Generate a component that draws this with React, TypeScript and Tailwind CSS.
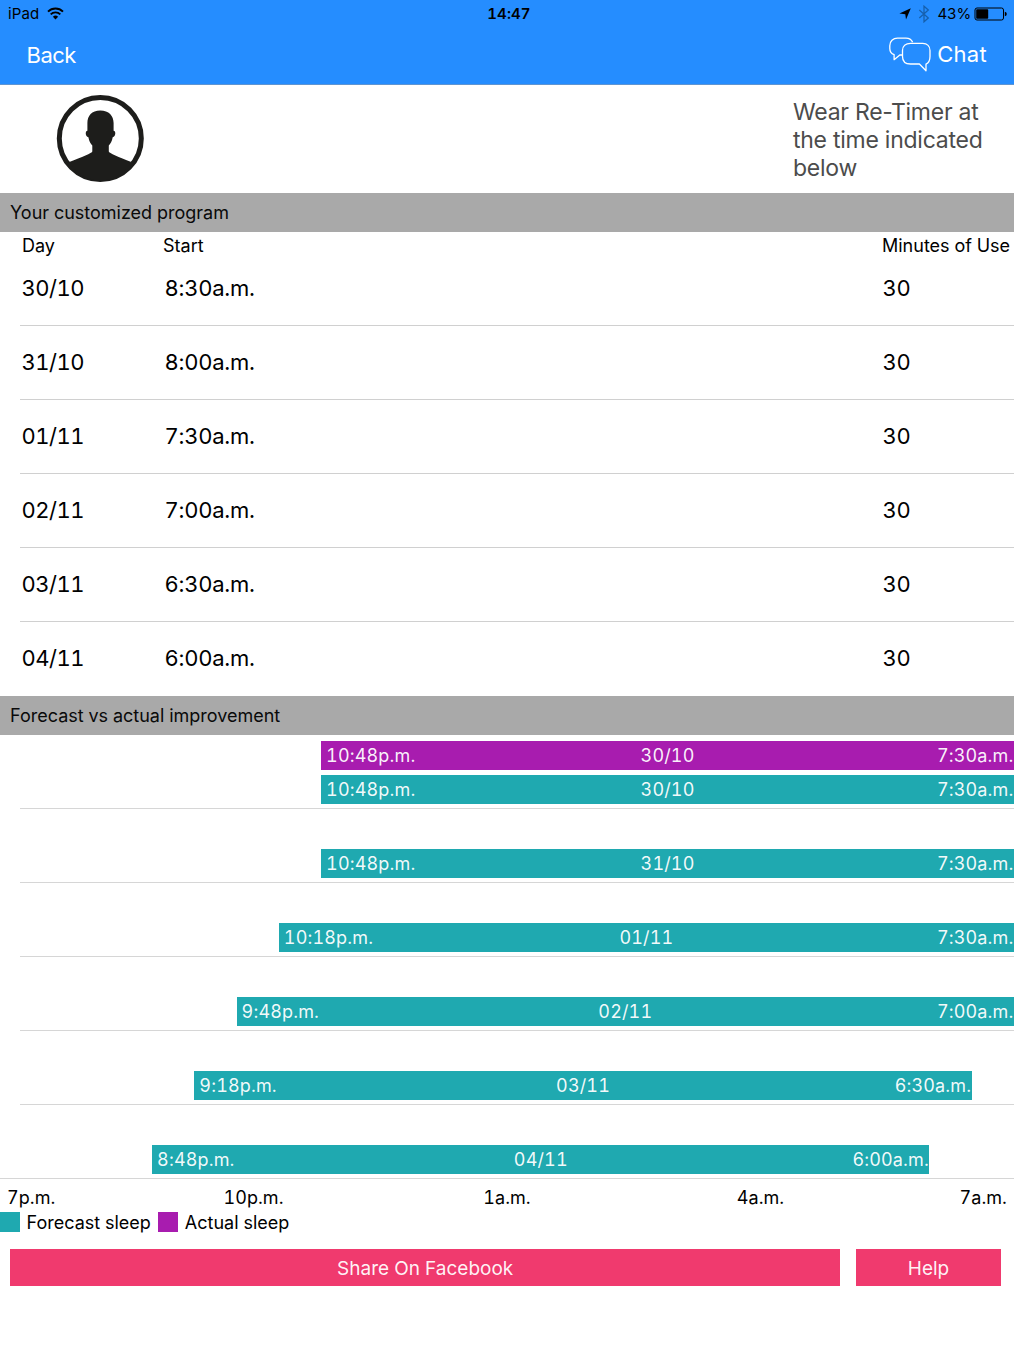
import clsx from "clsx";

const program = [
  { day: "30/10", start: "8:30a.m.", minutes: 30 },
  { day: "31/10", start: "8:00a.m.", minutes: 30 },
  { day: "01/11", start: "7:30a.m.", minutes: 30 },
  { day: "02/11", start: "7:00a.m.", minutes: 30 },
  { day: "03/11", start: "6:30a.m.", minutes: 30 },
  { day: "04/11", start: "6:00a.m.", minutes: 30 },
];

type Sleep = {
  kind: "forecast" | "actual";
  day: string;
  from: string;
  to: string;
  // hours after 7p.m.
  start: number;
  end: number;
};

const nights: Sleep[][] = [
  [
    { kind: "actual", day: "30/10", from: "10:48p.m.", to: "7:30a.m.", start: 3.8, end: 12.5 },
    { kind: "forecast", day: "30/10", from: "10:48p.m.", to: "7:30a.m.", start: 3.8, end: 12.5 },
  ],
  [{ kind: "forecast", day: "31/10", from: "10:48p.m.", to: "7:30a.m.", start: 3.8, end: 12.5 }],
  [{ kind: "forecast", day: "01/11", from: "10:18p.m.", to: "7:30a.m.", start: 3.3, end: 12.5 }],
  [{ kind: "forecast", day: "02/11", from: "9:48p.m.", to: "7:00a.m.", start: 2.8, end: 12 }],
  [{ kind: "forecast", day: "03/11", from: "9:18p.m.", to: "6:30a.m.", start: 2.3, end: 11.5 }],
  [{ kind: "forecast", day: "04/11", from: "8:48p.m.", to: "6:00a.m.", start: 1.8, end: 11 }],
];

const HOURS = 12;

function WifiIcon() {
  return (
    <svg width="17" height="13" viewBox="0 0 17 13" fill="none" stroke="#000" strokeWidth="1.9" className="-mt-0.5" aria-hidden>
      <path d="M1 4.6a10.6 10.6 0 0 1 15 0" />
      <path d="M3.7 7.4a6.8 6.8 0 0 1 9.6 0" />
      <path d="M8.5 12.4 5.9 9.8a3.7 3.7 0 0 1 5.2 0z" fill="#000" stroke="none" />
    </svg>
  );
}

function StatusBar() {
  return (
    <div className="grid h-7 grid-cols-3 items-center text-[15px] text-black">
      <div className="flex items-center gap-[8px] pl-2">
        <span className="tracking-[0.1px]">iPad</span>
        <WifiIcon />
      </div>
      <span className="pl-1 text-center font-semibold tracking-[0.1px]">14:47</span>
      <div className="flex items-center justify-end pr-[7px]">
        <svg width="12" height="12" viewBox="0 0 12 12" aria-hidden>
          <path d="M11.8.3 7 11.6 6.3 6.2.4 5.5z" />
        </svg>
        <svg
          width="12"
          height="18"
          viewBox="0 0 12 18"
          fill="none"
          stroke="#1660ad"
          strokeWidth="1.3"
          className="ml-[7px]"
          aria-hidden
        >
          <path d="m1.3 5 9 8L6 16.8V1.2L10.3 5l-9 8" />
        </svg>
        <span className="ml-[7px] tracking-[-0.2px]">43%</span>
        <svg width="33" height="14" viewBox="0 0 33 14" className="ml-[3px]" aria-hidden>
          <rect x="1" y="1" width="28.5" height="12" rx="2" fill="none" stroke="#000" />
          <rect x="2.2" y="2.2" width="12" height="9.6" rx="0.8" />
          <path d="M30.8 4.7q2 .5 2 2.3t-2 2.3z" />
        </svg>
      </div>
    </div>
  );
}

function ChatIcon() {
  return (
    <svg
      width="42"
      height="35"
      viewBox="0 0 42 35"
      fill="none"
      stroke="#fff"
      strokeWidth="1.3"
      strokeLinejoin="round"
      aria-hidden
    >
      <path d="M23.6 5.1C22.3 2.4 20 1.2 17 1.2H8.5C4 1.2.8 4.4.8 8.7v2.8c0 3 1.4 5 4.3 6.2v5L10.8 18h2.4" />
      <path d="M21.5 6.4h12.2c4.5 0 7.3 3 7.3 7.2v5.9c0 3.9-1.4 6.4-4 7.6v6.7L30.4 27h-8.9c-4.9 0-8-2.8-8-7.5v-5.9c0-4.4 3.2-7.2 8-7.2z" />
    </svg>
  );
}

function Avatar() {
  return (
    <svg width="88" height="88" viewBox="0 0 88 88" aria-hidden>
      <circle cx="44.3" cy="44.5" r="41" fill="#fff" stroke="#1d1d1b" strokeWidth="5" />
      <path
        fill="#1d1d1b"
        d="M44.3 16.500c8.600 0 13.300 5.400 13.300 12.500v7.700c2.600 0 2.200 5.800-.9 6.600-.7 4.200-2.200 6.300-3.900 8.200v6c0 1.600 10 5.500 22.500 10.500-7 11.500-18 18.500-31 18.500s-24-7-31-18.500c12.500-5 23-8.900 23-10.500v-6c-1.700-1.900-3.200-4-3.900-8.200-3.100-.8-3.500-6.600-1-6.600V29c0-7.100 4.300-12.500 12.900-12.500z"
      />
    </svg>
  );
}

function SectionTitle({ children }: { children: string }) {
  return (
    <h2 className="flex h-[39px] items-center bg-[#a9a9a9] pl-2.5 text-[18px] text-[#0a0a0a]">
      {children}
    </h2>
  );
}

function SleepBar({ sleep }: { sleep: Sleep }) {
  const end = Math.min(sleep.end, HOURS);
  return (
    <div
      className={clsx(
        "grid h-[29px] grid-cols-3 items-center pl-[5px] text-[18px] tracking-[0.15px] text-white/95",
        sleep.kind === "actual" ? "bg-[#a81caf]" : "bg-[#1fa9b0]"
      )}
      style={{
        marginLeft: `${(sleep.start / HOURS) * 100}%`,
        width: `${((end - sleep.start) / HOURS) * 100}%`,
      }}
    >
      <span>{sleep.from}</span>
      <span className="-ml-[5px] text-center">{sleep.day}</span>
      <span className="pr-[0.5px] text-right">{sleep.to}</span>
    </div>
  );
}

export default function App() {
  return (
    <div className="min-h-[1352px] w-[1014px] overflow-hidden bg-white font-['Inter','Liberation_Sans',sans-serif] text-black tabular-nums">
      <header className="h-[85px] border-b border-[#5f95d2] bg-[#258dff]">
        <StatusBar />
        <nav className="flex h-[54px] items-center justify-between pl-[26.5px] pr-[27px] text-[22px] text-white">
          <button type="button" className="tracking-[-0.5px]">
            Back
          </button>
          <button type="button" className="flex items-center gap-[6.5px] pb-0.5">
            <ChatIcon />
            <span className="tracking-[0.3px]">Chat</span>
          </button>
        </nav>
      </header>

      <section className="flex h-[108px] justify-between pl-14 pr-7 pt-[9px]">
        <Avatar />
        <p className="w-[193px] pt-1 text-[23px] leading-7 tracking-[-0.25px] whitespace-nowrap text-[#4c4c4c] normal-nums">
          Wear Re-Timer at
          <br />
          the time indicated
          <br />
          below
        </p>
      </section>

      <SectionTitle>Your customized program</SectionTitle>
      <section className="h-[464px]">
        <div className="-mb-1.5 grid h-[26px] grid-cols-[141px_719px_1fr] items-center pl-[22px] text-[18px] whitespace-nowrap">
          <span>Day</span>
          <span>Start</span>
          <span>Minutes of Use</span>
        </div>
        <ul className="pl-5">
          {program.map((row) => (
            <li
              key={row.day}
              className="grid h-[74px] grid-cols-[143px_718px_1fr] items-center border-b border-[#d0d0d0] pl-[1.5px] text-[22px] tracking-[-0.25px] last:border-transparent"
            >
              <span className="tracking-[-0.5px]">{row.day}</span>
              <span>{row.start}</span>
              <span>{row.minutes}</span>
            </li>
          ))}
        </ul>
      </section>

      <SectionTitle>Forecast vs actual improvement</SectionTitle>
      <section>
        {nights.map((night, i) => (
          <div key={i}>
            <div className="flex h-[73px] flex-col justify-end gap-[5px] pb-1">
              {night.map((sleep) => (
                <SleepBar key={sleep.kind} sleep={sleep} />
              ))}
            </div>
            <div className={clsx("h-px bg-[#d6d6d6]", i < nights.length - 1 && "ml-5")} />
          </div>
        ))}
        <div className="grid h-9 grid-cols-[1fr_2fr_2fr_2fr_1fr] items-center text-center text-[18px] tracking-[0.05px]">
          <span className="pl-[7px] text-left">7p.m.</span>
          <span>10p.m.</span>
          <span>1a.m.</span>
          <span>4a.m.</span>
          <span className="pr-[7px] text-right">7a.m.</span>
        </div>
        <div className="-mt-1 flex h-[22px] items-center text-[18px]">
          <span className="size-5 bg-[#1fa9b0]" />
          <span className="ml-[6.5px]">Forecast sleep</span>
          <span className="ml-[7px] size-5 bg-[#a81caf]" />
          <span className="ml-[7px]">Actual sleep</span>
        </div>
      </section>

      <footer className="mt-4 flex h-[37px] gap-4 pl-[10.4px] pr-[13px] text-[19px] text-white/95">
        <button type="button" className="flex-1 bg-[#f03a6e] pt-[3px]">
          Share On Facebook
        </button>
        <button type="button" className="w-[145px] bg-[#f03a6e] pt-[3px]">
          Help
        </button>
      </footer>
    </div>
  );
}
